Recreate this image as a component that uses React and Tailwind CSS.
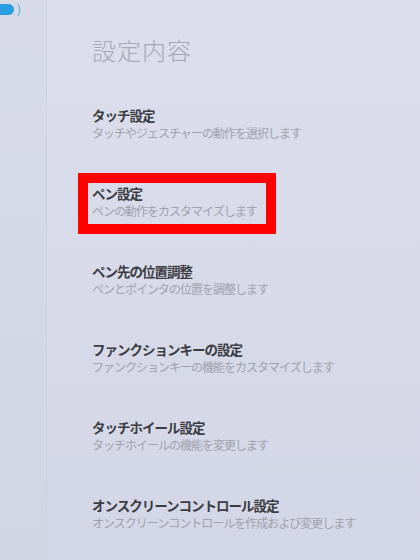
const items = [
  { title: "タッチ設定", desc: "タッチやジェスチャーの動作を選択します" },
  { title: "ペン設定", desc: "ペンの動作をカスタマイズします", marked: true },
  { title: "ペン先の位置調整", desc: "ペンとポインタの位置を調整します" },
  { title: "ファンクションキーの設定", desc: "ファンクションキーの機能をカスタマイズします" },
  { title: "タッチホイール設定", desc: "タッチホイールの機能を変更します" },
  { title: "オンスクリーンコントロール設定", desc: "オンスクリーンコントロールを作成および変更します" },
];

export default function App() {
  return (
    <div
      className="w-[420px] h-[560px] flex overflow-hidden bg-gradient-to-b from-[#dcdeec] to-[#d3d6e6]"
      style={{ fontFamily: '"Noto Sans CJK JP", "Noto Sans", sans-serif' }}
    >
      {/* left strip */}
      <div className="w-[47px] shrink-0 border-r border-[#ccd0de] bg-[#d2d6e2]/40 pt-[3px]">
        <div className="flex items-center gap-[3px]">
          <div className="w-[14px] h-[11px] rounded-r-full bg-[#2a9fe0]" />
          <span className="text-[12px] leading-[12px] text-[#3aa6e4]">)</span>
        </div>
      </div>

      {/* content */}
      <div className="flex-1 pl-[45px] pt-[36px]">
        <h1 className="text-[24px] leading-[28px] font-light tracking-[1px] text-[#a6a9b2]">
          設定内容
        </h1>

        <div className="mt-[42px] flex flex-col gap-[42px]">
          {items.map((it) => (
            <div key={it.title} className="relative">
              <p className="text-[13.5px] leading-[18px] font-bold tracking-[-1px] text-[#3b3c42]">
                {it.title}
              </p>
              <p className="text-[12px] leading-[18px] tracking-[-1px] text-[#a0a2ab]">
                {it.desc}
              </p>
              {it.marked && (
                <div className="absolute left-[-14px] top-[-11px] w-[198px] h-[61px] border-[10px] border-[#ff0000]" />
              )}
            </div>
          ))}
        </div>
      </div>
    </div>
  );
}
